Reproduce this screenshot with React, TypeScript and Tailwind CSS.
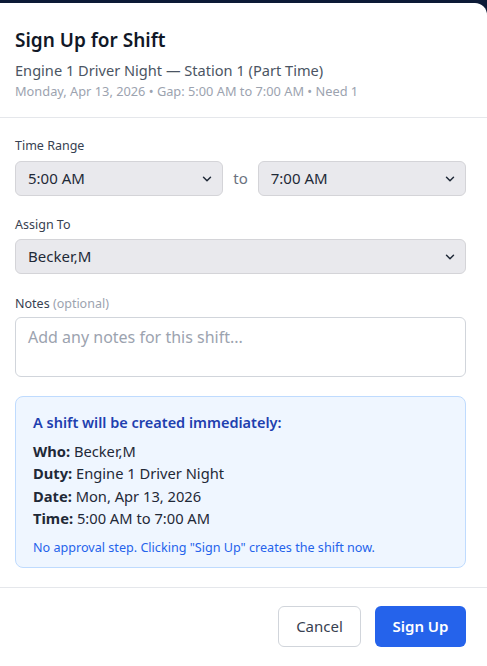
import { ChevronDown } from 'lucide-react'

const font = { fontFamily: '"Noto Sans", "Open Sans", sans-serif' }

function Select({ value, className = '' }: { value: string; className?: string }) {
  return (
    <div className={`relative ${className}`}>
      <select
        defaultValue={value}
        className="w-full h-[35px] appearance-none rounded-md border border-[#d4d4d8] bg-[#e9e9ed] pl-[12px] pr-8 text-[15px] text-[#1f2937] outline-none"
      >
        <option>{value}</option>
      </select>
      <ChevronDown className="pointer-events-none absolute right-[9px] top-[11px] h-[14px] w-[14px] text-[#1f2937]" strokeWidth={2.5} />
    </div>
  )
}

export default function App() {
  return (
    <div className="h-[666px] w-[487px] overflow-hidden bg-[#0c1a36] pt-[3px]" style={font}>
      <div className="flex h-[675px] flex-col rounded-tr-xl rounded-br-xl bg-white">
        <div className="border-b border-[#e5e7eb] pl-[15px] pr-[21px] pt-[25px] pb-[18px]">
          <h2 className="text-[19px] font-semibold leading-[24px] text-[#111827]">Sign Up for Shift</h2>
          <p className="mt-[8px] text-[14.6px] leading-[20px] text-[#4b5563]">Engine 1 Driver Night — Station 1 (Part Time)</p>
          <p className="mt-[3px] text-[12.8px] leading-[16px] text-[#9ca3af]">Monday, Apr 13, 2026 • Gap: 5:00 AM to 7:00 AM • Need 1</p>
        </div>

        <div className="pl-[15px] pr-[21px] pt-[19px] pb-[19px]">
          <label className="block text-[12.5px] leading-[18px] text-[#374151]">Time Range</label>
          <div className="mt-[6px] flex items-center gap-[10px]">
            <Select value="5:00 AM" className="flex-1" />
            <span className="text-[15px] text-[#6b7280]">to</span>
            <Select value="7:00 AM" className="flex-1" />
          </div>

          <label className="mt-[20px] block text-[12.5px] leading-[18px] text-[#374151]">Assign To</label>
          <Select value="Becker,M" className="mt-[5px]" />

          <label className="mt-[21px] block text-[12.5px] leading-[18px] text-[#374151]">
            Notes <span className="text-[#9ca3af]">(optional)</span>
          </label>
          <textarea
            placeholder="Add any notes for this shift..."
            className="mt-[4px] block h-[60px] w-full resize-none rounded-md border border-[#d1d5db] bg-white px-[12px] py-[7px] text-[16px] text-[#1f2937] placeholder-[#9ca3af] outline-none"
          />

          <div className="mt-[19px] rounded-lg border border-[#bfdbfe] bg-[#eff6ff] pl-[17px] pr-4 pt-[14px] pb-[11px]">
            <p className="text-[14.5px] font-semibold leading-[22px] text-[#1e40af]">A shift will be created immediately:</p>
            <div className="mt-[7px] text-[14.7px] leading-[22.4px] text-[#1f2937]">
              <div><span className="font-bold">Who:</span> Becker,M</div>
              <div><span className="font-bold">Duty:</span> Engine 1 Driver Night</div>
              <div><span className="font-bold">Date:</span> Mon, Apr 13, 2026</div>
              <div><span className="font-bold">Time:</span> 5:00 AM to 7:00 AM</div>
            </div>
            <p className="mt-[10px] text-[12.6px] leading-[16px] text-[#2563eb]">No approval step. Clicking "Sign Up" creates the shift now.</p>
          </div>
        </div>

        <div className="flex justify-end gap-[14px] border-t border-[#e5e7eb] pl-[15px] pr-[21px] pt-[18px]">
          <button className="h-[41px] w-[83px] rounded-md border border-[#d1d5db] bg-white text-[15px] text-[#374151]">Cancel</button>
          <button className="h-[41px] w-[91px] rounded-md bg-[#2563eb] text-[15px] font-semibold text-white">Sign Up</button>
        </div>
      </div>
    </div>
  )
}
